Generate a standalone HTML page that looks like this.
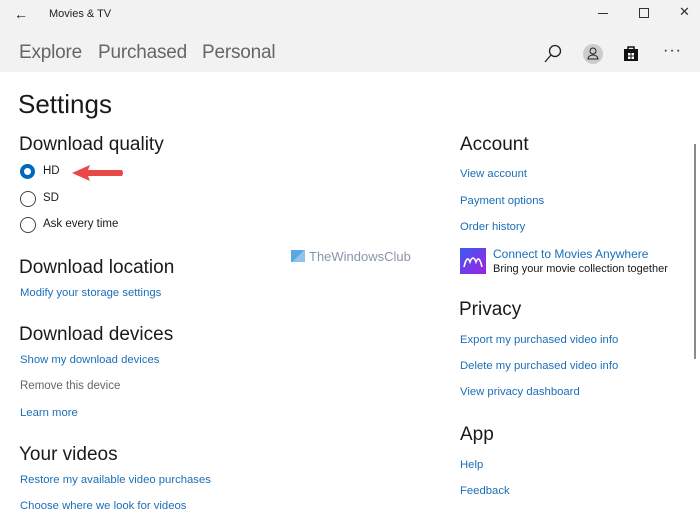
<!DOCTYPE html>
<html><head><style>
body{margin:0;width:700px;height:512px;overflow:hidden;background:#fff;font-family:"Liberation Sans",sans-serif;position:relative}
.hdr{position:absolute;left:0;top:0;width:700px;height:72px;background:#f2f2f2}
.a{position:absolute;white-space:nowrap}
.h{font-size:19px;color:#1a1a1a}
.l{font-size:11.3px;color:#1b6fb8}
.t{font-size:11.5px;color:#1a1a1a}
.nav{font-size:19px;color:#666;top:42px;letter-spacing:-0.2px}
.r{position:absolute;left:20px;width:14px;height:14px;border:1px solid #444;border-radius:50%}
</style></head><body>
<div class="hdr"></div>
<div class="a" style="left:14px;top:6px;font-size:14px;color:#222">←</div>
<div class="a" style="left:49px;top:8px;font-size:11px;color:#222">Movies &amp; TV</div>
<div class="a" style="left:598px;top:13px;width:10px;height:1px;background:#333"></div>
<div class="a" style="left:639px;top:8px;width:8px;height:8px;border:1px solid #333"></div>
<div class="a" style="left:679px;top:4px;font-size:13px;color:#333">✕</div>
<div class="a nav" style="left:19px">Explore</div>
<div class="a nav" style="left:98px">Purchased</div>
<div class="a nav" style="left:202px">Personal</div>
<svg class="a" style="left:543px;top:44px" width="20" height="20"><circle cx="12" cy="7" r="5.5" fill="none" stroke="#222" stroke-width="1.3"/><line x1="8" y1="11" x2="2" y2="18" stroke="#222" stroke-width="1.3"/></svg>
<svg class="a" style="left:582px;top:43px" width="22" height="22"><circle cx="11" cy="11" r="10" fill="#ccc"/><circle cx="11" cy="8" r="3" fill="none" stroke="#222"/><path d="M6 16a5 4 0 0 1 10 0z" fill="none" stroke="#222"/></svg>
<svg class="a" style="left:622px;top:44px" width="18" height="18"><path d="M6 5V3h6v2" fill="none" stroke="#111" stroke-width="1.5"/><rect x="2" y="5" width="14" height="12" fill="#111"/><rect x="6" y="9" width="2.5" height="2.5" fill="#fff"/><rect x="9.5" y="9" width="2.5" height="2.5" fill="#fff"/><rect x="6" y="12.5" width="2.5" height="2.5" fill="#fff"/><rect x="9.5" y="12.5" width="2.5" height="2.5" fill="#fff"/></svg>
<div class="a" style="left:663px;top:42px;font-size:16px;color:#222;letter-spacing:1px">···</div>

<div class="a" style="left:18px;top:89px;font-size:26px;color:#1a1a1a">Settings</div>
<div class="a h" style="left:19px;top:134px">Download quality</div>
<div class="r" style="top:164px;border:4px solid #0067c0;width:7px;height:7px"></div>
<div class="a t" style="left:43px;top:165px">HD</div>
<svg class="a" style="left:70px;top:162px" width="56" height="22"><path d="M2 11 L20 3 L18 8 L52 8 Q54 11 52 14 L18 14 L20 19 Z" fill="#e84848"/></svg>
<div class="r" style="top:191px"></div><div class="a t" style="left:43px;top:192px">SD</div>
<div class="r" style="top:217px"></div><div class="a t" style="left:43px;top:218px">Ask every time</div>
<div class="a h" style="left:19px;top:257px">Download location</div>
<div class="a l" style="left:20px;top:287px">Modify your storage settings</div>
<div class="a h" style="left:19px;top:324px">Download devices</div>
<div class="a l" style="left:20px;top:354px">Show my download devices</div>
<div class="a t" style="left:20px;top:380px;color:#666">Remove this device</div>
<div class="a l" style="left:20px;top:407px">Learn more</div>
<div class="a h" style="left:19px;top:444px">Your videos</div>
<div class="a l" style="left:20px;top:474px">Restore my available video purchases</div>
<div class="a l" style="left:20px;top:500px">Choose where we look for videos</div>

<div class="a" style="left:291px;top:250px;width:14px;height:12px;background:linear-gradient(135deg,#5aa8e0 50%,#8ec4ec 50%)"></div>
<div class="a" style="left:309px;top:249px;font-size:13px;color:#8a94a8">TheWindowsClub</div>

<div class="a h" style="left:460px;top:134px">Account</div>
<div class="a l" style="left:460px;top:168px">View account</div>
<div class="a l" style="left:460px;top:195px">Payment options</div>
<div class="a l" style="left:460px;top:221px">Order history</div>
<div class="a" style="left:460px;top:248px;width:26px;height:26px;background:linear-gradient(135deg,#3a5cf0,#a020e0)"></div>
<svg class="a" style="left:460px;top:248px" width="26" height="26"><path d="M4 19 Q7 6 10 14 Q13 6 16 14 Q19 6 22 19" fill="none" stroke="#fff" stroke-width="1.6"/></svg>
<div class="a l" style="left:493px;top:247px;font-size:12px">Connect to Movies Anywhere</div>
<div class="a t" style="left:493px;top:263px;font-size:11px">Bring your movie collection together</div>
<div class="a h" style="left:459px;top:299px">Privacy</div>
<div class="a l" style="left:460px;top:334px">Export my purchased video info</div>
<div class="a l" style="left:460px;top:360px">Delete my purchased video info</div>
<div class="a l" style="left:460px;top:386px">View privacy dashboard</div>
<div class="a h" style="left:460px;top:424px">App</div>
<div class="a l" style="left:460px;top:459px">Help</div>
<div class="a l" style="left:460px;top:485px">Feedback</div>
<div class="a" style="left:694px;top:144px;width:2px;height:215px;background:#8a8a8a"></div>
</body></html>
